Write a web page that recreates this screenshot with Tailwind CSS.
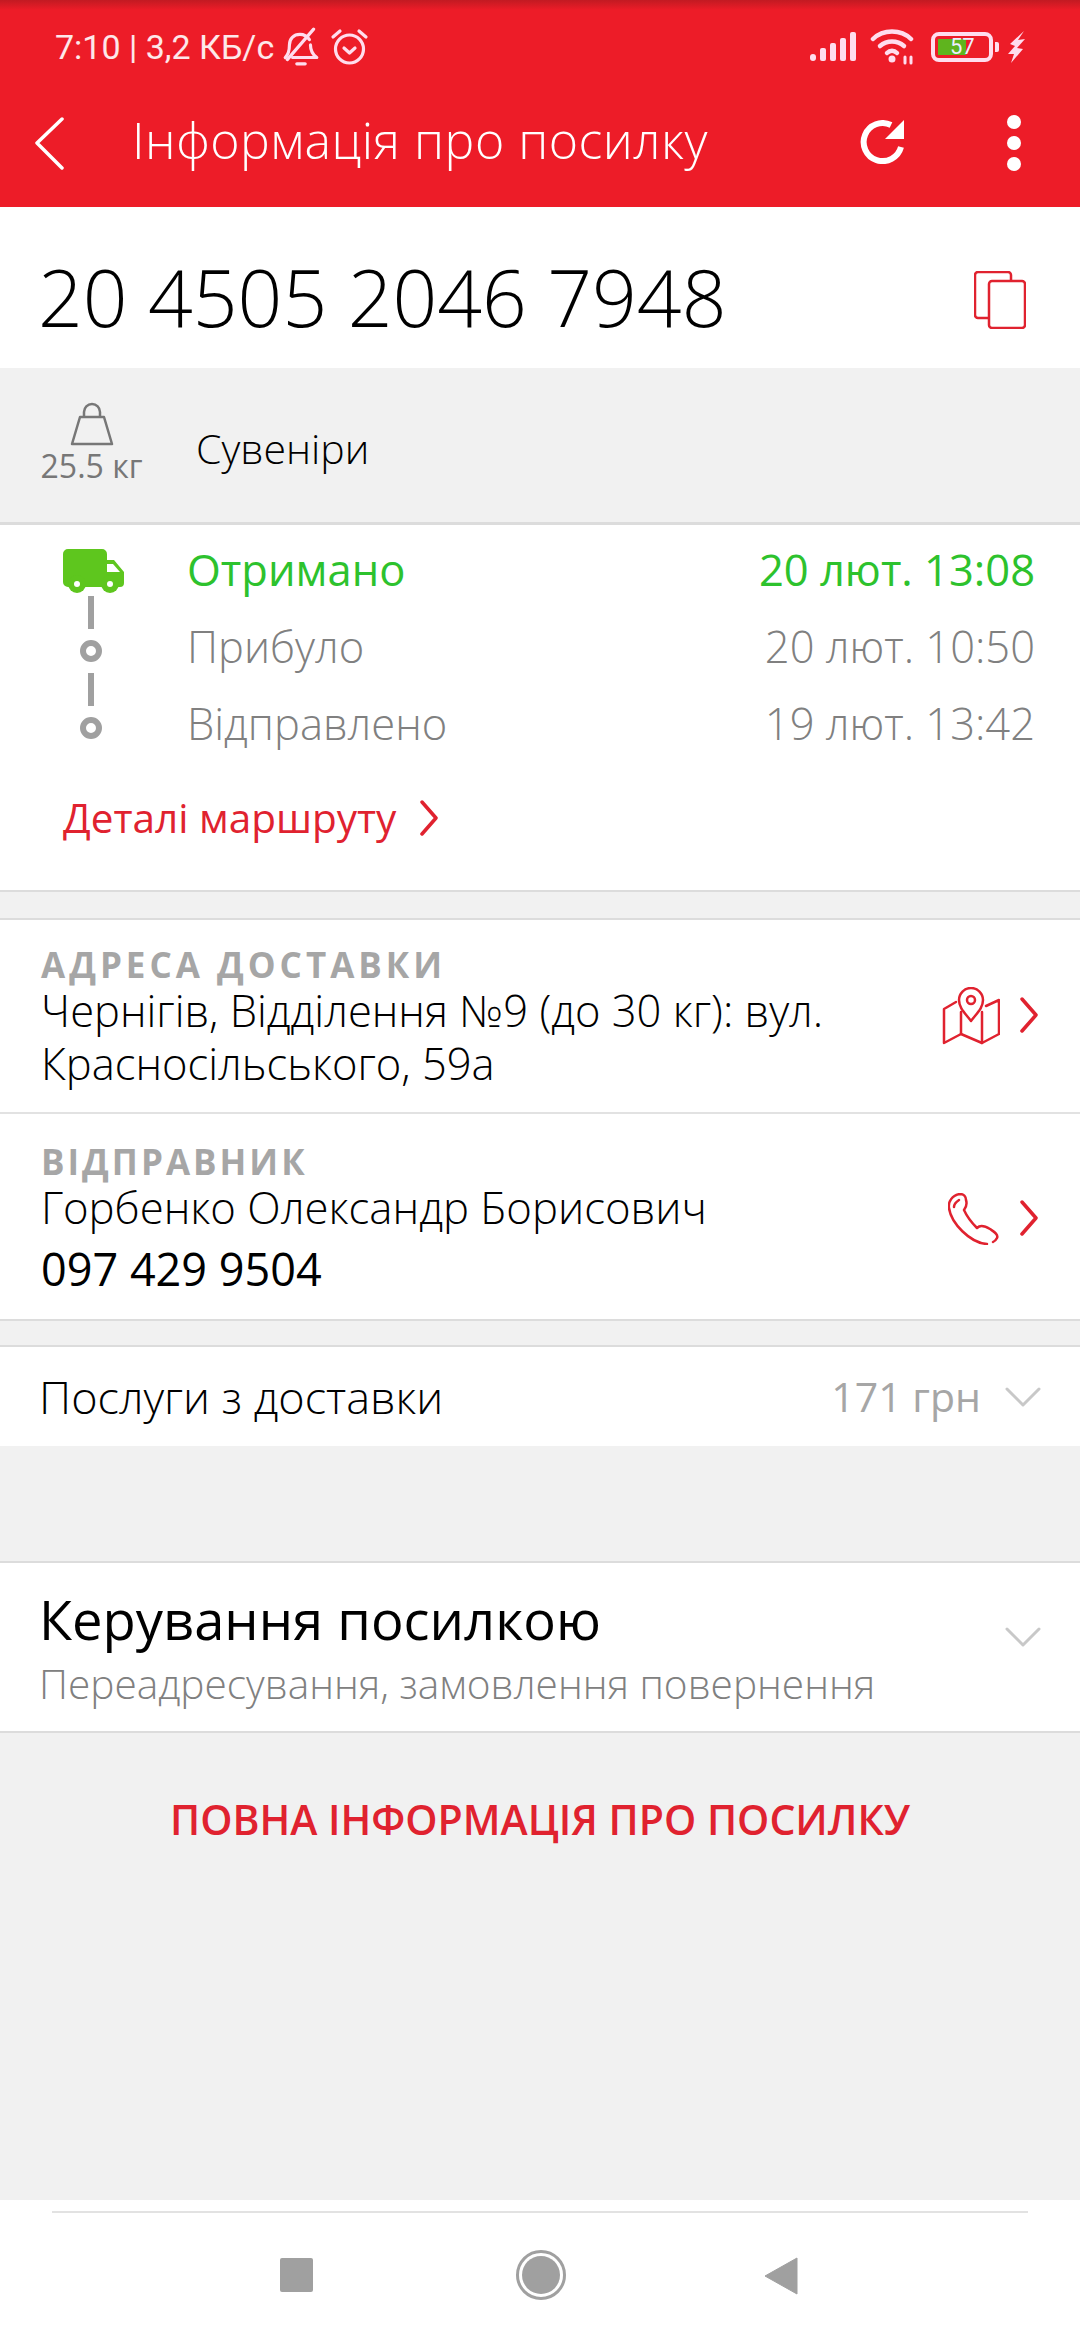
<!DOCTYPE html>
<html lang="uk">
<head>
  <meta charset="UTF-8">
  <meta name="viewport" content="width=device-width, initial-scale=1.0">
  <title>Інформація про посилку</title>
  <script src="https://cdn.jsdelivr.net/npm/@tailwindcss/browser@4"></script>
</head>
<body class="bg-[#f1f1f1] font-['Open_Sans','Noto_Sans',sans-serif] font-light">
<div class="w-[1080px] h-[2340px] flex flex-col overflow-hidden">

  <!-- status bar + toolbar -->
  <header class="h-[207px] shrink-0 bg-[#ed1c28] text-white relative">
    <div class="h-[10px] bg-gradient-to-b from-[#c21a22] to-[#ed1c28]"></div>
    <div class="h-[74px] pl-[55px] pr-[55px] flex items-center justify-between">
      <div class="flex items-center">
        <span class="text-[34px] font-normal text-white/90 font-['Roboto',sans-serif]">7:10 | 3,2 КБ/с</span>
        <svg class="ml-[8px] w-[38px] h-[40px]" viewBox="0 0 36 38" fill="none" stroke="#fde" stroke-width="3" stroke-linecap="round" stroke-linejoin="round">
          <path d="M3 29c3-3 4-6 4-12 0-6 4-10 10-10 4 0 7 2 9 5"/><path d="M27 17c0 6 2 9 6 12H10"/><path d="M30 2 5 31"/><path d="M14 35h8"/>
        </svg>
        <svg class="ml-[10px] w-[39px] h-[38px]" viewBox="0 0 39 38" fill="none" stroke="#fde" stroke-width="3.2" stroke-linecap="round" stroke-linejoin="round">
          <circle cx="19.5" cy="21" r="14"/><path d="M14 20l5.500 5 5.500-5"/><path d="M3 9l7-6M36 9l-7-6"/>
        </svg>
      </div>
      <div class="flex items-center">
        <svg class="w-[48px] h-[32px]" viewBox="0 0 48 32" fill="#fde">
          <rect x="1" y="23" width="6" height="7" rx="3"/><rect x="11" y="17" width="6" height="13" rx="2"/><rect x="21" y="12" width="6" height="18" rx="2"/><rect x="31" y="7" width="6" height="23" rx="2"/><rect x="41" y="1" width="6" height="29" rx="2"/>
        </svg>
        <svg class="ml-[13px] w-[46px] h-[36px]" viewBox="0 0 46 36" fill="none" stroke="#fde" stroke-width="4.500" stroke-linecap="round">
          <path d="M3 10c10-10 28-10 38 0"/><path d="M10 17c7-6 17-6 24 0"/><path d="M17 24c3-3 7-3 10 0"/><circle cx="22" cy="30" r="2" fill="#fde" stroke-width="3"/><path d="M35 28v6M41 28v6" stroke-width="3"/>
        </svg>
        <div class="ml-[15px] flex items-center gap-[2px]">
          <div class="w-[62px] h-[30px] rounded-[8px] border-[4px] border-[#fde] flex items-center pl-[3px] relative">
            <div class="w-[28px] h-[16px] bg-[#5fb41e]"></div>
            <span class="absolute left-[15px] top-[-3px] text-[22px] font-normal leading-[28px] text-[#eef] font-['Roboto',sans-serif]">57</span>
          </div>
          <div class="w-[4px] h-[10px] bg-[#fde] rounded-r-[2px]"></div>
        </div>
        <svg class="ml-[8px] w-[18px] h-[32px]" viewBox="0 0 18 32" fill="#fde"><path d="M17 0 3 13l5 2-7 8h6L4 32l12-14-6-1 8-9-7 1z"/></svg>
      </div>
    </div>
    <div class="h-[123px] pb-[12px] flex items-center relative">
      <svg class="absolute left-[34px] top-[33px] w-[30px] h-[53px]" viewBox="0 0 30 53" fill="none" stroke="#fff" stroke-width="3.500" stroke-linecap="round" stroke-linejoin="round"><path d="M28 2 3 26l25 25"/></svg>
      <h1 class="ml-[132px] text-[50px] tracking-[0.5px] font-light leading-none">Інформація про посилку</h1>
      <svg class="absolute left-[860px] top-[36px] w-[44px] h-[44px]" viewBox="0 0 44 44" fill="none" stroke="#fff" stroke-width="6">
        <path d="M31 5A19 19 0 1 0 41 27"/><path d="M44 0V19H25z" fill="#fff" stroke="none"/>
      </svg>
      <div class="absolute left-[1007px] top-[31px] flex flex-col gap-[7px]">
        <span class="w-[14px] h-[14px] rounded-full bg-white"></span>
        <span class="w-[14px] h-[14px] rounded-full bg-white"></span>
        <span class="w-[14px] h-[14px] rounded-full bg-white"></span>
      </div>
    </div>
  </header>

  <!-- number -->
  <section class="h-[161px] shrink-0 bg-white pl-[38px] pr-[54px] pt-[20px] flex items-center justify-between">
    <span class="text-[78.5px] font-light text-black leading-none">20 4505 2046 7948</span>
    <svg class="mt-[5px] w-[52px] h-[58px]" viewBox="0 0 52 58" fill="none" stroke="#e0222f" stroke-width="2.500" stroke-linejoin="round">
      <path d="M14 47H4a3 3 0 0 1-3-3V4a3 3 0 0 1 3-3h30a3 3 0 0 1 3 3v6"/><rect x="15" y="10" width="36" height="47" rx="3"/>
    </svg>
  </section>

  <!-- weight and kind -->
  <section class="h-[157px] shrink-0 border-b-[3px] border-[#dcdcdc] pl-[40px] flex items-start">
    <div class="w-[103px] pt-[34px] flex flex-col items-center">
      <svg class="w-[44px] h-[44px]" viewBox="0 0 44 44" fill="none" stroke="#777" stroke-width="2.500" stroke-linejoin="round">
        <path d="M14 15V10a8 8 0 0 1 16 0v5"/><path d="M10 15h24l8 27H2z"/>
      </svg>
      <span class="mt-[3px] text-[32px] font-normal leading-[34px] text-[#777] whitespace-nowrap">25.5 кг</span>
    </div>
    <span class="ml-[53px] mt-[55px] text-[41px] leading-[50px] text-black">Сувеніри</span>
  </section>

  <!-- tracking -->
  <section class="h-[367px] shrink-0 bg-white border-b-[2px] border-[#dcdcdc] pl-[63px] pr-[45px] pt-[24px]">
    <div class="flex">
      <div class="w-[61px] shrink-0 flex flex-col items-start">
        <svg class="w-[61px] h-[44px]" viewBox="0 0 61 44" fill="#5ec61e">
          <path d="M5 0h34a5 5 0 0 1 5 5v6h7l10 12v11a4 4 0 0 1-4 4H5a5 5 0 0 1-5-5V5a5 5 0 0 1 5-5z"/>
          <circle cx="14" cy="35" r="9"/><circle cx="47" cy="35" r="9"/>
          <circle cx="14" cy="35" r="3" fill="#fff"/><circle cx="47" cy="35" r="3" fill="#fff"/>
          <path d="M44 15h6l7 8H44z" fill="#fff"/>
        </svg>
        <span class="ml-[25px] mt-[3px] w-[6px] h-[33px] bg-[#a0a0a0]"></span>
        <span class="ml-[17px] mt-[11px] w-[22px] h-[22px] rounded-full border-[6px] border-[#a0a0a0]"></span>
        <span class="ml-[25px] mt-[11px] w-[6px] h-[33px] bg-[#a0a0a0]"></span>
        <span class="ml-[17px] mt-[11px] w-[22px] h-[22px] rounded-full border-[6px] border-[#a0a0a0]"></span>
      </div>
      <div class="ml-[63px] -mt-[18px] flex-1 flex flex-col text-[43.5px] leading-[77px]">
        <div class="flex justify-between text-[#2dc22d] font-normal"><span>Отримано</span><span>20 лют. 13:08</span></div>
        <div class="flex justify-between text-[#808080]"><span>Прибуло</span><span>20 лют. 10:50</span></div>
        <div class="flex justify-between text-[#808080]"><span>Відправлено</span><span>19 лют. 13:42</span></div>
      </div>
    </div>
    <div class="mt-[32px] flex items-center gap-[24px] text-[#e0222f] font-normal">
      <span class="text-[40.5px] leading-[48px]">Деталі маршруту</span>
      <svg class="w-[18px] h-[36px]" viewBox="0 0 18 36" fill="none" stroke="#e0222f" stroke-width="3.500" stroke-linecap="round" stroke-linejoin="round"><path d="M2 2l14 16L2 34"/></svg>
    </div>
  </section>

  <div class="h-[26px] shrink-0"></div>

  <!-- address and sender -->
  <section class="h-[403px] shrink-0 bg-white border-y-[2px] border-[#dcdcdc]">
    <div class="h-[194px] border-b-[2px] border-[#e2e2e2] pl-[41px] pr-[42px] pt-[26px] flex justify-between">
      <div>
        <p class="text-[35px] font-bold tracking-[4px] leading-[38px] text-[#a6a6a6]">АДРЕСА ДОСТАВКИ</p>
        <p class="w-[860px] text-[43.5px] leading-[53px] text-black">Чернігів, Відділення №9 (до 30 кг): вул. Красносільського, 59а</p>
      </div>
      <div class="flex items-start gap-[20px] pt-[41px]">
        <svg class="w-[58px] h-[58px]" viewBox="0 0 58 58" fill="none" stroke="#e0222f" stroke-width="2.500" stroke-linecap="round" stroke-linejoin="round">
          <path d="M14 15 2 22v34l17-9 21 9 17-9V13l-13 6"/><path d="M19 25v22M40 25v31"/>
          <path d="M29 34c-6-8-12-13-12-21a12 12 0 0 1 24 0c0 8-6 13-12 21z"/><circle cx="29" cy="13" r="4"/>
        </svg>
        <svg class="mt-[10px] w-[18px] h-[36px]" viewBox="0 0 18 36" fill="none" stroke="#e0222f" stroke-width="3.500" stroke-linecap="round" stroke-linejoin="round"><path d="M2 2l14 16L2 34"/></svg>
      </div>
    </div>
    <div class="pl-[41px] pr-[42px] pt-[29px] flex justify-between">
      <div>
        <p class="text-[35px] font-bold tracking-[3px] leading-[38px] text-[#a6a6a6]">ВІДПРАВНИК</p>
        <p class="text-[43.7px] leading-[53px] text-black">Горбенко Олександр Борисович</p>
        <p class="mt-[8px] text-[45px] font-normal leading-[53px] text-black">097 429 9504</p>
      </div>
      <div class="flex items-start gap-[20px] pt-[50px]">
        <svg class="w-[52px] h-[52px]" viewBox="0 0 52 52" fill="none" stroke="#e0222f" stroke-width="2.500" stroke-linecap="round" stroke-linejoin="round">
          <path d="M39 51C22 50 3 30 1 15c-1-6 3-13 11-14 4 0 6 3 6 6 1 3 1 6-2 10 4 9 9 14 13 18 3-3 8-2 13 1 3 2 9 5 7 9-1 2-2 3-4 4"/><path d="M6 14c0-3 2-5 5-7"/>
        </svg>
        <svg class="mt-[7px] w-[18px] h-[36px]" viewBox="0 0 18 36" fill="none" stroke="#e0222f" stroke-width="3.500" stroke-linecap="round" stroke-linejoin="round"><path d="M2 2l14 16L2 34"/></svg>
      </div>
    </div>
  </section>

  <div class="h-[24px] shrink-0"></div>

  <!-- delivery services -->
  <section class="h-[101px] shrink-0 bg-white border-t-[2px] border-[#dcdcdc] pl-[39px] pr-[39px] flex items-center justify-between">
    <span class="text-[45px] text-black">Послуги з доставки</span>
    <div class="flex items-center gap-[24px]">
      <span class="text-[41px] font-normal text-[#a6a6a6]">171 грн</span>
      <svg class="w-[36px] h-[20px]" viewBox="0 0 36 20" fill="none" stroke="#c8c8c8" stroke-width="3" stroke-linecap="round" stroke-linejoin="round"><path d="M2 2l16 16L34 2"/></svg>
    </div>
  </section>

  <div class="h-[115px] shrink-0"></div>

  <!-- parcel management -->
  <section class="h-[172px] shrink-0 bg-white border-y-[2px] border-[#dcdcdc] pl-[39px] pr-[39px] pt-[23px] flex justify-between">
    <div>
      <p class="text-[54.3px] font-normal leading-[66px] text-black">Керування посилкою</p>
      <p class="mt-[9px] text-[40.6px] leading-[46px] text-[#808080]">Переадресування, замовлення повернення</p>
    </div>
    <svg class="mt-[41px] w-[36px] h-[20px]" viewBox="0 0 36 20" fill="none" stroke="#c8c8c8" stroke-width="3" stroke-linecap="round" stroke-linejoin="round"><path d="M2 2l16 16L34 2"/></svg>
  </section>

  <div class="h-[467px] shrink-0 pt-[61px] text-center">
    <span class="text-[41px] font-semibold leading-[50px] text-[#e0222f]">ПОВНА ІНФОРМАЦІЯ ПРО ПОСИЛКУ</span>
  </div>

  <!-- navigation bar -->
  <nav class="flex-1 bg-white pt-[11px]">
    <div class="mx-[52px] h-[2px] bg-[#e2e2e2]"></div>
    <div class="mt-[37px] relative h-[52px]">
      <span class="absolute left-[280px] top-[8px] w-[33px] h-[34px] rounded-[2px] bg-[#a0a0a0]"></span>
      <span class="absolute left-[516px] top-0 w-[50px] h-[50px] rounded-full border-[3px] border-[#a0a0a0] p-[3px]"><span class="block w-full h-full rounded-full bg-[#a0a0a0]"></span></span>
      <svg class="absolute left-[764px] top-[7px] w-[34px] h-[38px]" viewBox="0 0 34 38" fill="#a0a0a0"><path d="M33 1v36L1 19z" stroke="#a0a0a0" stroke-linejoin="round"/></svg>
    </div>
  </nav>
</div>
</body>
</html>
